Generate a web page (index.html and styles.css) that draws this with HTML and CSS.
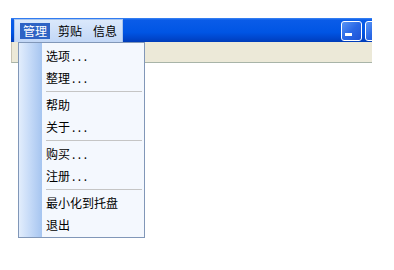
FILE: index.html
```html
<!DOCTYPE html>
<html lang="zh">
<head>
<meta charset="utf-8">
<link rel="stylesheet" href="styles.css">
</head>
<body>
<div class="window">
  <div class="titlebar">
    <div class="menustrip">
      <span class="mi active">管理</span>
      <span class="mi">剪贴</span>
      <span class="mi">信息</span>
    </div>
    <div class="buttons">
      <span class="tbtn"><span class="dash"></span></span>
      <span class="tbtn"></span>
    </div>
  </div>
  <div class="toolbar"></div>
  <div class="dropdown">
    <div class="item">选项<span class="dots">...</span></div>
    <div class="item">整理<span class="dots">...</span></div>
    <div class="sep"></div>
    <div class="item">帮助</div>
    <div class="item">关于<span class="dots">...</span></div>
    <div class="sep"></div>
    <div class="item">购买<span class="dots">...</span></div>
    <div class="item">注册<span class="dots">...</span></div>
    <div class="sep"></div>
    <div class="item">最小化到托盘</div>
    <div class="item">退出</div>
  </div>
</div>
</body>
</html>
```
FILE: styles.css
```css
html, body {
  margin: 0;
  padding: 0;
  background: #ffffff;
  height: 270px;
}
body {
  font-family: "Noto Sans CJK SC", "Noto Sans", sans-serif;
  font-size: 12px;
  color: #000;
}
.window {
  position: relative;
  margin: 18px 0 0 11px;
  width: 361px;
  height: 240px;
}
.titlebar {
  height: 24px;
  display: flex;
  overflow: hidden;
  background: linear-gradient(to bottom, #3d86f4 0, #0a5ce8 2px, #0055e4 60%, #0046cc 85%, #003cb8 100%);
}
.menustrip {
  margin: 1px 0 0 3px;
  width: 109px;
  height: 23px;
  box-sizing: border-box;
  padding: 0 0 0 5px;
  display: flex;
  align-items: center;
  gap: 5px;
  background: linear-gradient(to bottom, #dae8fb, #c2d7f6);
  border: 1px solid #a8c4ec;
  border-bottom: none;
}
.mi {
  height: 16px;
  line-height: 16px;
  padding: 0 3px;
  color: #000;
}
.mi.active {
  background: #2e63c4;
  color: #fff;
}
.buttons {
  margin-left: auto;
  margin-right: -14px;
  display: flex;
  gap: 3px;
  padding-top: 3px;
}
.tbtn {
  position: relative;
  width: 21px;
  height: 20px;
  box-sizing: border-box;
  border: 1px solid #ffffff;
  border-radius: 3px;
  background: linear-gradient(135deg, #5a95f5 0, #2a68e6 50%, #1d52d4 100%);
}
.dash {
  position: absolute;
  left: 3px;
  top: 11px;
  width: 7px;
  height: 3px;
  background: #ffffff;
}
.toolbar {
  height: 21px;
  box-sizing: border-box;
  background: #ece9d8;
  border-left: 1px solid #c8c4b4;
  border-bottom: 1px solid #a8b4a8;
}
.dropdown {
  position: absolute;
  left: 7px;
  top: 24px;
  width: 127px;
  box-sizing: border-box;
  border: 1px solid #8197b8;
  padding: 2px 0 1px 0;
  background:
    linear-gradient(to right, #e2edfc 0, #c8dcf8 10px, #a6c5f0 23px, #f4f8fe 23px, #f4f8fe 100%);
}
.item {
  height: 22px;
  line-height: 22px;
  padding-left: 27px;
  white-space: nowrap;
}
.dots {
  margin-left: 2px;
  letter-spacing: 2.5px;
}
.sep {
  height: 1px;
  margin: 2px 2px 2px 27px;
  background: #c5c5c5;
}
```
